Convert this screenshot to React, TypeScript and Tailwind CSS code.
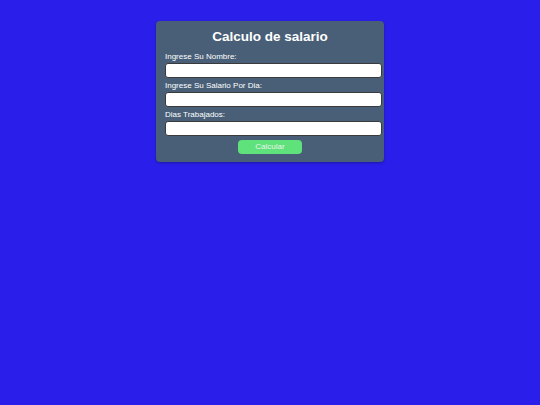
import React from "react";

export default function App() {
  return (
    <div className="min-h-[405px] w-full bg-[#2a1fea] pt-[21px] font-['Liberation_Sans',Arial,sans-serif]">
      <div className="mx-auto w-[228px] rounded-[4px] bg-[#485f77] px-[9px] pt-[7px] pb-[8px] shadow-[0_1px_3px_rgba(0,0,0,0.3)]">
        <h1 className="text-center text-[13.5px] font-bold leading-[18px] text-white">Calculo de salario</h1>
        <div className="mt-[6px] flex flex-col">
          <label className="text-[8px] leading-[10px] text-white">Ingrese Su Nombre:</label>
          <input className="mt-[1px] h-[15px] w-[217px] rounded-[3px] border border-[#3a3a3a] bg-white" />
          <label className="mt-[3px] text-[8px] leading-[10px] text-white">Ingrese Su Salario Por Dia:</label>
          <input className="mt-[1px] h-[15px] w-[217px] rounded-[3px] border border-[#3a3a3a] bg-white" />
          <label className="mt-[3px] text-[8px] leading-[10px] text-white">Dias Trabajados:</label>
          <input className="mt-[1px] h-[15px] w-[217px] rounded-[3px] border border-[#3a3a3a] bg-white" />
          <div className="mt-[4px] flex justify-center">
            <button className="h-[14px] w-[64px] rounded-[4px] bg-[#5fe27b] text-[8px] leading-[14px] text-[#e8f5ea]">Calcular</button>
          </div>
        </div>
      </div>
    </div>
  );
}
